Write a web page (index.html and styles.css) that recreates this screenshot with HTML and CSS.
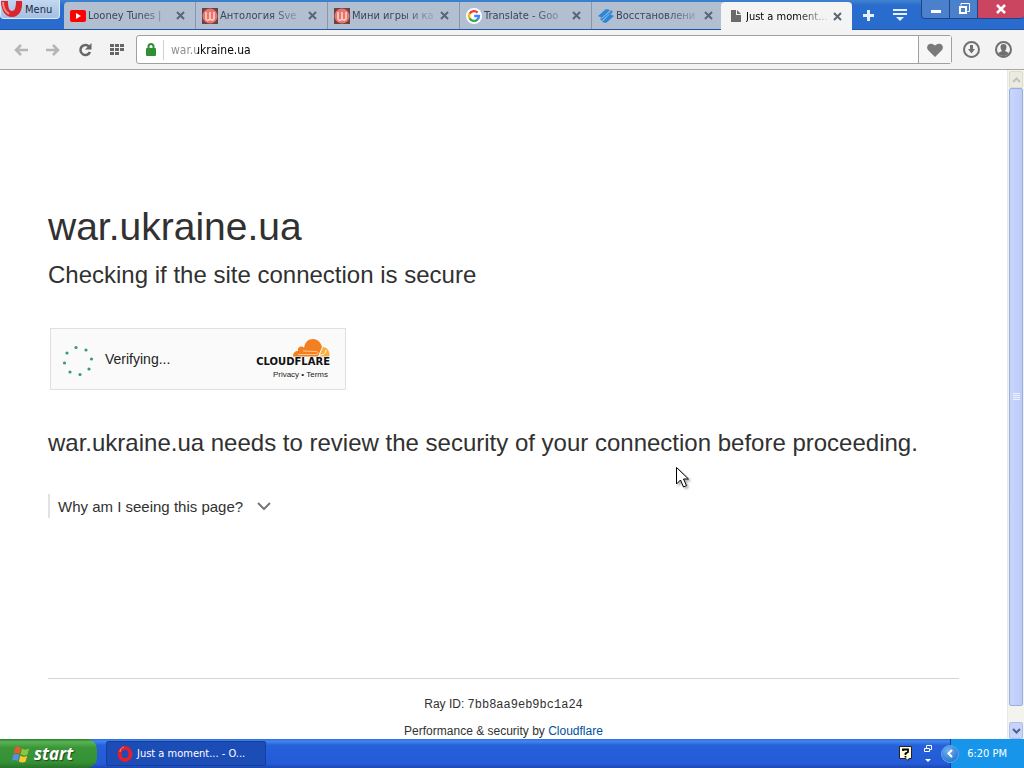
FILE: index.html
```
<!DOCTYPE html>
<html lang="en">
  <head>
    <meta charset="UTF-8" />
    <meta name="viewport" content="width=device-width, initial-scale=1.0" />
    <title>Just a moment...</title>
    <link rel="stylesheet" href="styles.css">
  </head>
  <body>
    <header class="tabbar">
      <button class="menu-btn">
        <svg class="menu-logo" width="22" height="17" viewBox="0 0 22 17">
          <path d="M0 0C0 9 4 16 11 16S22 9 21 0H15C15 6 14 10 11 10S7 6 7 0Z" fill="#d9262e" />
          <path d="M2 1C2 7 5 11 8 13" fill="none" stroke="#f58a84" stroke-width="2" />
        </svg>
        Menu
      </button>

      <nav class="tabs">
        <div class="tab">
          <svg width="16" height="16" viewBox="0 0 16 16">
            <rect y="2" width="16" height="12" rx="2" fill="#f00" />
            <path d="M6 5l5 3-5 3z" fill="#fff" />
          </svg>
          <span class="tab-title">Looney Tunes |</span>
          <button class="tab-close" aria-label="Close tab"><svg width="9" height="9" viewBox="0 0 9 9"><path d="M1 1l7 7M8 1l-7 7" /></svg></button>
        </div>
        <div class="tab">
          <svg width="16" height="16" viewBox="0 0 16 16">
            <rect width="16" height="16" fill="#6d4146" />
            <circle cx="8" cy="8" r="7.5" fill="#e8766f" />
            <path d="M4 4v6c0 3 2 3 4 1V4M8 11c2 2 4 1 4-1V4" fill="none" stroke="#ffd9cf" stroke-width="1.5" />
          </svg>
          <span class="tab-title">Антология Sve</span>
          <button class="tab-close" aria-label="Close tab"><svg width="9" height="9" viewBox="0 0 9 9"><path d="M1 1l7 7M8 1l-7 7" /></svg></button>
        </div>
        <div class="tab">
          <svg width="16" height="16" viewBox="0 0 16 16">
            <rect width="16" height="16" fill="#6d4146" />
            <circle cx="8" cy="8" r="7.5" fill="#e8766f" />
            <path d="M4 4v6c0 3 2 3 4 1V4M8 11c2 2 4 1 4-1V4" fill="none" stroke="#ffd9cf" stroke-width="1.5" />
          </svg>
          <span class="tab-title">Мини игры и ка</span>
          <button class="tab-close" aria-label="Close tab"><svg width="9" height="9" viewBox="0 0 9 9"><path d="M1 1l7 7M8 1l-7 7" /></svg></button>
        </div>
        <div class="tab">
          <svg width="16" height="16" viewBox="0 0 16 16">
            <circle cx="8" cy="8" r="8" fill="#fff" />
            <g fill="none" stroke-width="2.4">
              <path d="M11.6 4.6A5 5 0 0 0 3.6 5.8" stroke="#ea4335" />
              <path d="M3.6 5.6A5 5 0 0 0 3.6 10.4" stroke="#fbbc05" />
              <path d="M3.6 10.2A5 5 0 0 0 11.4 11.6" stroke="#34a853" />
              <path d="M11.2 11.7A5 5 0 0 0 13 8H8.2" stroke="#4285f4" />
            </g>
          </svg>
          <span class="tab-title">Translate - Goo</span>
          <button class="tab-close" aria-label="Close tab"><svg width="9" height="9" viewBox="0 0 9 9"><path d="M1 1l7 7M8 1l-7 7" /></svg></button>
        </div>
        <div class="tab">
          <svg width="16" height="16" viewBox="0 0 16 16">
            <path d="M0 8L8 1l4 1-8 8zM4 14l8-8 4 2-8 7zM2 11L13 2l2 2L4 13z" fill="#2f86d6" />
            <path d="M3.500 10.500L13 2.500M4.500 12.500L11.500 6" stroke="#8fc0ee" />
          </svg>
          <span class="tab-title">Восстановлени</span>
          <button class="tab-close" aria-label="Close tab"><svg width="9" height="9" viewBox="0 0 9 9"><path d="M1 1l7 7M8 1l-7 7" /></svg></button>
        </div>
        <div class="tab tab-active">
          <svg width="16" height="16" viewBox="0 0 16 16">
            <path d="M3 2h5v5h5v7H3z" fill="#6b6b6b" />
            <path d="M9 2l4 4h-4z" fill="#6b6b6b" />
          </svg>
          <span class="tab-title">Just a moment...</span>
          <button class="tab-close" aria-label="Close tab"><svg width="9" height="9" viewBox="0 0 9 9"><path d="M1 1l7 7M8 1l-7 7" /></svg></button>
        </div>
      </nav>

      <button class="bar-btn" aria-label="New tab">
        <svg width="11" height="11" viewBox="0 0 11 11"><path d="M5.500 0v11M0 5.500h11" stroke="#e4f0ff" stroke-width="3" /></svg>
      </button>
      <button class="bar-btn" aria-label="Tab menu">
        <svg width="14" height="13" viewBox="0 0 14 13">
          <path d="M0 1h14M0 5h14" stroke="#e4f0ff" stroke-width="2" />
          <path d="M3 8h8l-4 4z" fill="#e4f0ff" />
        </svg>
      </button>

      <div class="window-controls">
        <button aria-label="Minimize"><svg width="12" height="12" viewBox="0 0 12 12"><path d="M1 7h10v3H1z" fill="#fff" /></svg></button>
        <button aria-label="Restore">
          <svg width="12" height="12" viewBox="0 0 12 12"><path d="M3 2.500V.5h8.500v8H9.500" fill="none" stroke="#fff" /><path d="M2 4h6v6H2z" fill="none" stroke="#fff" stroke-width="2" /></svg>
        </button>
        <button class="close" aria-label="Close"><svg width="12" height="12" viewBox="0 0 12 12"><path d="M2 2l8 8M10 2l-8 8" stroke="#fff" stroke-width="2.500" /></svg></button>
      </div>
    </header>

    <div class="toolbar">
      <button class="tool-btn" aria-label="Back">
        <svg width="14" height="12" viewBox="0 0 14 12"><path d="M14 6H3M7 1L2 6l5 5" fill="none" stroke="#b5b5b5" stroke-width="2.500" /></svg>
      </button>
      <button class="tool-btn" aria-label="Forward">
        <svg width="14" height="12" viewBox="0 0 14 12"><path d="M0 6h11M7 1l5 5-5 5" fill="none" stroke="#b5b5b5" stroke-width="2.500" /></svg>
      </button>
      <button class="tool-btn" aria-label="Reload">
        <svg width="14" height="14" viewBox="0 0 14 14"><path d="M11 3.500A5 5 0 1 0 12 9" fill="none" stroke="#666" stroke-width="2.500" /><path d="M13.500 0v6.500H7z" fill="#666" /></svg>
      </button>
      <button class="tool-btn" aria-label="Speed dial">
        <svg width="14" height="12" viewBox="0 0 14 12"><path d="M0 1.500h14M0 5.500h14" stroke="#666" stroke-width="3" stroke-dasharray="4 1" /><path d="M0 9.500h9" stroke="#666" stroke-width="3" stroke-dasharray="4 1" /></svg>
      </button>
      <div class="address">
        <svg width="10" height="13" viewBox="0 0 10 13">
          <path d="M2.500 6V3.500a2.500 2.500 0 0 1 5 0V6" fill="none" stroke="#2f8f33" stroke-width="2" />
          <rect y="5" width="10" height="8" rx="1" fill="#2f8f33" />
        </svg>
        <input class="url" type="text" value="war.ukraine.ua" aria-label="Address" />
        <button class="heart" aria-label="Bookmark">
          <svg width="16" height="14" viewBox="0 0 16 14"><path d="M8 14L1 7C-2 3 3-2 8 2.500C13-2 18 3 15 7Z" fill="#7a7a7a" /></svg>
        </button>
      </div>
      <button class="tool-btn" aria-label="Downloads">
        <svg width="17" height="17" viewBox="0 0 17 17"><circle cx="8.500" cy="8.500" r="7.500" fill="none" stroke="#707070" stroke-width="2" /><path d="M7 4h3v4h2l-3.500 4.500L5 8h2z" fill="#707070" /></svg>
      </button>
      <button class="tool-btn" aria-label="Account">
        <svg width="17" height="17" viewBox="0 0 17 17"><circle cx="8.500" cy="8.500" r="7.500" fill="none" stroke="#707070" stroke-width="2" /><path d="M8.500 3c2 0 3 1 3 3S10.500 9 10 10l4 2c-2 4-9 4-11 0l4-2C6.500 9 5.500 8 5.500 6s1-3 3-3z" fill="#707070" /></svg>
      </button>
    </div>

    <div class="viewport">
      <div class="page">
        <main>
          <h1>war.ukraine.ua</h1>
          <h2>Checking if the site connection is secure</h2>

          <div class="challenge">
            <svg class="spinner" width="32" height="32" viewBox="0 0 32 32" fill="#3a9a70">
              <circle cx="14" cy="2.500" r="1.600" /><circle cx="24" cy="5" r="1.600" />
              <circle cx="29.500" cy="14" r="1.600" /><circle cx="27" cy="24" r="1.600" />
              <circle cx="18" cy="29.500" r="1.600" /><circle cx="8" cy="27" r="1.600" />
              <circle cx="2.500" cy="18" r="1.600" /><circle cx="5" cy="8" r="1.600" />
            </svg>
            <span class="verifying">Verifying...</span>
            <div class="brand">
              <svg class="cloud" width="37" height="18" viewBox="0 0 37 18">
                <path d="M0 17.500C0 14 2 12 5 12C4 8 9 6 11 9C12 3 15 0 20 0C25 0 28 4 29 8L26 15L25 17.500Z" fill="#f38020" />
                <path d="M26.500 17.500L27.500 14L30 8C34 8 37 12 36.500 17.500Z" fill="#faae40" />
                <path d="M5 15.500H24C26 15 25 12.500 23 12.500L10 12" fill="none" stroke="#fbd9b8" stroke-width=".8" />
                <path d="M27 16C31 16 33 14 33 11" fill="none" stroke="#fff" />
              </svg>
              <span class="wordmark">CLOUDFLARE</span>
              <span class="terms"><a href="#">Privacy</a> &bull; <a href="#">Terms</a></span>
            </div>
          </div>

          <p class="review">war.ukraine.ua needs to review the security of your connection before proceeding.</p>

          <button class="why">
            Why am I seeing this page?
            <svg width="14" height="9" viewBox="0 0 14 9"><path d="M1 1l6 6 6-6" fill="none" stroke="#777" stroke-width="2" /></svg>
          </button>
        </main>

        <footer>
          <div>Ray ID: <code>7bb8aa9eb9bc1a24</code></div>
          <div>Performance &amp; security by <a href="#">Cloudflare</a></div>
        </footer>
      </div>

      <div class="scrollbar">
        <button class="scroll-btn scroll-up" aria-label="Scroll up"><svg width="9" height="6" viewBox="0 0 9 6"><path d="M1 5l3.500-3.500L8 5" /></svg></button>
        <div class="thumb">
          <svg width="7" height="8" viewBox="0 0 7 8"><path d="M0 .5h7M0 2.500h7M0 4.500h7M0 6.500h7" stroke="#eef4fe" /></svg>
        </div>
        <button class="scroll-btn" aria-label="Scroll down"><svg width="9" height="6" viewBox="0 0 9 6"><path d="M1 1l3.500 3.500L8 1" /></svg></button>
      </div>
    </div>

    <div class="taskbar">
      <button class="start">
        <svg width="18" height="18" viewBox="0 0 18 18">
          <path d="M3 3C5 1 7 2 9 3L7.500 9C5.500 8 3.500 7.500 1.500 9Z" fill="#e8592b" />
          <path d="M10 3.500C12 5 14 5 17 3.500L15.500 9.500C13 11 11 10.500 8.500 9.300Z" fill="#8cc63e" />
          <path d="M1.200 10C3.500 8.500 5.500 9 7.300 10L5.800 16C3.800 15 1.800 14.500 0 16Z" fill="#5a8de8" />
          <path d="M8.300 10.500C10.500 12 13 12 15.200 10.800L13.700 16.500C11.500 18 9 17.500 6.800 16.400Z" fill="#fbc62f" />
        </svg>
        start
      </button>
      <button class="task">
        <svg width="16" height="16" viewBox="0 0 16 16">
          <ellipse cx="8" cy="8" rx="5.500" ry="6" fill="none" stroke="#e0202c" stroke-width="4" />
          <path d="M3 6C3 3 5 1.500 7 1" fill="none" stroke="#f58a84" />
        </svg>
        Just a moment... - O...
      </button>
      <div class="tray-tools">
        <svg width="13" height="15" viewBox="0 0 13 15">
          <path d="M.5.5h12v12H10l-1 2-2-2H.5z" fill="#fffde0" stroke="#222" />
          <path d="M4 5V3.500h5V6L6.500 7.500V9M6.500 10v1.500" fill="none" stroke="#000" stroke-width="1.800" />
        </svg>
        <svg width="8" height="18" viewBox="0 0 8 18">
          <path d="M2.500 3V.5h5v4H6M.5 3.500h5v3h-5z" fill="none" stroke="#fff" />
          <path d="M1 14h6l-3 3z" fill="#fff" />
        </svg>
      </div>
      <div class="tray">
        <button class="tray-toggle" aria-label="Show hidden icons"><svg width="6" height="9" viewBox="0 0 6 9"><path d="M5 1L1.500 4.500 5 8" fill="none" stroke="#fff" stroke-width="2" /></svg></button>
        <span>6:20 PM</span>
      </div>
    </div>

    <svg class="cursor" width="15" height="23" viewBox="0 0 15 23">
      <path d="M.5.500V17l4-4 3 7 3-1.500-3-6.500h5z" fill="#fff" stroke="#000" />
    </svg>
  </body>
</html>
```
FILE: styles.css
```
* {
  box-sizing: border-box;
}
body {
  margin: 0;
  height: 100vh;
  display: flex;
  flex-direction: column;
  overflow: hidden;
  background-color: #fff;
  font-family: "DejaVu Sans Condensed", "DejaVu Sans", sans-serif;
  font-size: 11px;
}
button {
  display: flex;
  align-items: center;
  justify-content: center;
  padding: 0;
  border: none;
  background: none;
  font: inherit;
  color: inherit;
}
svg {
  flex: none;
}

/* tab bar */
.tabbar {
  display: flex;
  align-items: flex-start;
  height: 30px;
  background: linear-gradient(#3f83cf, #2a6ccd 20%, #2a6ccd);
  border-bottom: 1px solid #1f55a5;
}
.menu-btn {
  width: 60px;
  height: 19px;
  gap: 2px;
  margin-right: 4px;
  justify-content: flex-start;
  color: #1d2a3a;
  background: linear-gradient(#c3d7ef, #a3c0e4);
  border: 1px solid #dcebfa;
  border-top: none;
  border-radius: 0 0 4px 4px;
}
.tabs {
  display: flex;
  height: 30px;
  padding-top: 2px;
}
.tab {
  display: flex;
  align-items: center;
  gap: 2px;
  width: 132px;
  height: 27px;
  padding: 0 10px 0 6px;
  color: #3c4655;
  background-color: #b2bfd1;
  border-right: 1px solid #8797ae;
}
.tab:first-child {
  border-radius: 4px 0 0 0;
}
.tab-title {
  flex: 1;
  min-width: 0;
  overflow: hidden;
  white-space: nowrap;
  mask-image: linear-gradient(to right, #000 60%, rgba(0, 0, 0, 0.15) 98%);
}
.tab-close {
  margin-left: 2px;
}
.tab-close path {
  stroke: #5a6575;
  stroke-width: 2;
}
.tab-active {
  width: 131px;
  height: 28px;
  margin-left: -3px;
  padding-left: 7px;
  color: #000;
  background-color: #f4f4f4;
  border-right: none;
  border-radius: 4px 4px 0 0;
}
.bar-btn {
  width: 32px;
  height: 30px;
}
.window-controls {
  display: flex;
  height: 19px;
  margin-left: auto;
  border: 1px solid #1c4683;
  border-width: 0 0 1px 1px;
  border-radius: 0 0 4px 4px;
  overflow: hidden;
}
.window-controls button {
  width: 28px;
  background-color: #4a80cc;
  border-right: 1px solid #1c4683;
}
.window-controls .close {
  width: 46px;
  background-color: #cb4560;
  border-right: none;
}

/* toolbar */
.toolbar {
  display: flex;
  align-items: center;
  height: 40px;
  padding: 0 5px;
  background-color: #f3f3f3;
  border-bottom: 1px solid #a6a6a6;
}
.tool-btn {
  width: 32px;
  height: 30px;
}
.address {
  flex: 1;
  display: flex;
  align-items: center;
  height: 29px;
  margin: 0 3px;
  padding-left: 9px;
  background-color: #fff;
  border: 1px solid #a0a0a0;
  border-radius: 3px;
}
.url {
  flex: 1;
  min-width: 0;
  height: 20px;
  margin-left: 7px;
  padding: 0 0 0 7px;
  border: none;
  border-left: 1px solid #d0d0d0;
  outline: none;
  font: inherit;
  font-size: 12px;
  color: transparent;
  background: linear-gradient(to right, #8a8a8a 33px, #000 33px);
  background-clip: text;
}
.heart {
  width: 33px;
  height: 27px;
  background-color: #f6f6f6;
  border-left: 1px solid #a0a0a0;
}

/* page */
.viewport {
  flex: 1;
  min-height: 0;
  display: flex;
}
.page {
  flex: 1;
  display: flex;
  flex-direction: column;
  padding: 127px 48px 0;
  font-family: "Liberation Sans", Arial, sans-serif;
  color: #313131;
}
h1,
h2,
p {
  margin: 0;
  font-weight: 400;
}
h1 {
  font-size: 39px;
  line-height: 60px;
}
h2,
.review {
  font-size: 24px;
  line-height: 36px;
}
.challenge {
  display: flex;
  align-items: center;
  width: 296px;
  height: 62px;
  margin: 35px 2px;
  padding: 0 15px 0 11px;
  background-color: #fafafa;
  border: 1px solid #e0e0e0;
}
.spinner {
  margin-top: 3px;
}
.verifying {
  margin-left: 11px;
  font-size: 14px;
  color: #222;
}
.brand {
  display: flex;
  flex-direction: column;
  align-items: flex-end;
  margin-left: auto;
}
.wordmark {
  font-family: "DejaVu Sans", sans-serif;
  font-size: 10px;
  line-height: 10px;
  font-weight: 700;
  color: #111;
}
.terms {
  margin: 3px 2px 0;
  font-size: 8px;
  line-height: 9px;
  color: #222;
}
.terms a {
  color: inherit;
  text-decoration: none;
}
.why {
  gap: 14px;
  height: 24px;
  margin-top: 33px;
  padding-left: 8px;
  border-left: 2px solid #e3e3e3;
  font-size: 15px;
  color: #313131;
}
footer {
  display: flex;
  flex-direction: column;
  gap: 10px;
  margin-top: auto;
  padding-top: 17px;
  border-top: 1px solid #d5d5d5;
  font-size: 12px;
  line-height: 16px;
  text-align: center;
}
footer code {
  font-family: "Liberation Mono", monospace;
  font-size: 12px;
}
footer a {
  color: #0051a0;
  text-decoration: none;
}

/* scrollbar */
.scrollbar {
  display: flex;
  flex-direction: column;
  width: 17px;
  padding: 1px 1px 0;
  background-color: #f4f4ee;
  border-left: 1px solid #e4ece4;
}
.scroll-btn {
  height: 17px;
  background-color: #c6d3fb;
  border: 1px solid #aebfec;
  border-radius: 2px;
}
.scroll-btn path {
  fill: none;
  stroke: #4d6185;
  stroke-width: 2;
}
.scroll-up {
  background-color: #ecebe2;
  border-color: #deddd0;
}
.scroll-up path {
  stroke: #c3c2b6;
}
.thumb {
  flex: 1;
  display: flex;
  align-items: center;
  justify-content: center;
  margin-bottom: 16px;
  background: linear-gradient(to right, #c9d5fd, #bdcbf9);
  border: 1px solid #98aee2;
  border-radius: 2px;
}

/* taskbar */
.taskbar {
  display: flex;
  align-items: center;
  height: 29px;
  color: #fff;
  background: linear-gradient(#2f6be0, #3f87f0 8%, #2660da 22%, #245bd8 85%, #1c47b0);
}
.start {
  align-self: stretch;
  width: 97px;
  gap: 4px;
  padding-right: 12px;
  background: linear-gradient(#2f7a30, #5ab455 10%, #3a9639 30%, #359135 80%, #27722a);
  border-radius: 0 10px 10px 0;
  font-family: "Open Sans", sans-serif;
  font-size: 17px;
  font-weight: 700;
  font-style: italic;
  text-shadow: 1px 1px 1px #1c4a1c;
}
.task {
  width: 160px;
  height: 25px;
  gap: 4px;
  margin-left: 9px;
  padding-left: 10px;
  justify-content: flex-start;
  background-color: #1c4cb5;
  border: 1px solid #163f9b;
  border-radius: 2px;
}
.tray-tools {
  display: flex;
  align-items: center;
  gap: 12px;
  margin-left: auto;
  margin-right: 9px;
}
.tray {
  display: flex;
  align-items: center;
  align-self: stretch;
  gap: 8px;
  padding-right: 17px;
  background: linear-gradient(to right, transparent 9px, #0e3f97 9px, #0e3f97 10px, transparent 10px),
    linear-gradient(to right, transparent 9px, #1795ea 9px);
}
.tray-toggle {
  width: 18px;
  height: 18px;
  background: radial-gradient(circle at 40% 30%, #6fb4f5, #1664c8);
  border: 1px solid #5ba5ea;
  border-radius: 50%;
}

/* mouse pointer over the page */
.cursor {
  position: absolute;
  left: 676px;
  top: 467px;
  filter: drop-shadow(2px 2px 1px rgba(0, 0, 0, 0.3));
}
```
